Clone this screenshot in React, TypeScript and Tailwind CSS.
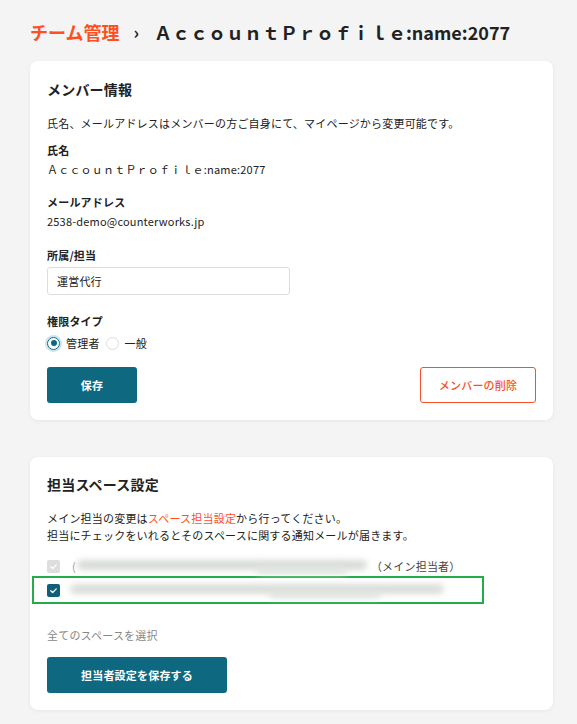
import React from "react";

const font = { fontFamily: '"Noto Sans CJK JP", "Noto Sans", sans-serif' };

function Check({ className }: { className?: string }) {
  return (
    <svg viewBox="0 0 12 12" className={className} fill="none">
      <path d="M3 6.2 5.1 8.2 9 4.2" stroke="white" strokeWidth="1.4" strokeLinecap="round" strokeLinejoin="round" />
    </svg>
  );
}

function Radio({ checked, label }: { checked?: boolean; label: string }) {
  return (
    <label className="flex items-center gap-[6px]">
      {checked ? (
        <span className="flex h-[13px] w-[13px] items-center justify-center rounded-full border-[1.5px] border-[#0e6880] shadow-[0_0_0_2px_#cfe3ec]">
          <span className="h-[6px] w-[6px] rounded-full bg-[#0e6880]" />
        </span>
      ) : (
        <span className="h-[13px] w-[13px] rounded-full border border-[#dcdcdc] bg-white" />
      )}
      <span>{label}</span>
    </label>
  );
}

export default function App() {
  return (
    <div className="min-h-[724px] bg-[#f4f4f4] pb-[14px] pl-[30px] pr-[24px] pt-[20px] text-[11px] leading-[16px] tracking-[0.2px] text-[#222]" style={font}>
      {/* breadcrumb */}
      <h1 className="flex items-center text-[18px] font-bold leading-[24px] tracking-normal">
        <span className="text-[#ff4f1f]">チーム管理</span>
        <span className="ml-[14px] mr-[15px] text-[17px]">›</span>
        <span>ＡｃｃｏｕｎｔＰｒｏｆｉｌｅ:name:2077</span>
      </h1>

      {/* member info */}
      <section className="mt-[17px] rounded-lg bg-white px-[17px] pb-[17px] pt-[18px] shadow-[0_1px_4px_rgba(0,0,0,0.06)]">
        <h2 className="text-[14px] font-bold leading-[20px]">メンバー情報</h2>
        <p className="mt-[16px]">氏名、メールアドレスはメンバーの方ご自身にて、マイページから変更可能です。</p>

        <div className="mt-[11px] font-bold">氏名</div>
        <div className="mt-[3px]">ＡｃｃｏｕｎｔＰｒｏｆｉｌｅ:name:2077</div>

        <div className="mt-[17px] font-bold">メールアドレス</div>
        <div className="mt-[3px]">2538-demo@counterworks.jp</div>

        <div className="mt-[18px] font-bold">所属/担当</div>
        <div className="mt-[4px] flex h-[28px] w-[243px] items-center rounded-[3px] border border-[#dddddd] px-[9px]">運営代行</div>

        <div className="mt-[18px] font-bold">権限タイプ</div>
        <div className="mt-[6px] flex items-center gap-[6px]">
          <Radio checked label="管理者" />
          <Radio label="一般" />
        </div>

        <div className="mt-[16px] flex items-center justify-between">
          <button className="flex h-[36px] w-[90px] items-center justify-center rounded-[3px] bg-[#0e6880] font-bold text-white">保存</button>
          <button className="flex h-[36px] w-[116px] items-center justify-center rounded-[3px] border border-[#f5512a] bg-white font-medium text-[#f5512a]">メンバーの削除</button>
        </div>
      </section>

      {/* space settings */}
      <section className="mt-[37px] rounded-lg bg-white px-[17px] pb-[17px] pt-[17px] shadow-[0_1px_4px_rgba(0,0,0,0.06)]">
        <h2 className="text-[14px] font-bold leading-[20px]">担当スペース設定</h2>
        <p className="mt-[16px] leading-[17px]">
          メイン担当の変更は<span className="text-[#ff4f1f]">スペース担当設定</span>から行ってください。
          <br />
          担当にチェックをいれるとそのスペースに関する通知メールが届きます。
        </p>

        <div className="mt-[12px] flex h-[20px] items-center">
          <span className="flex h-[13px] w-[13px] items-center justify-center rounded-[2px] bg-[#dedede]">
            <Check className="h-[11px] w-[11px]" />
          </span>
          <span className="ml-[12px] text-[#999]">(</span>
          <span className="relative ml-[1px] h-[14px] w-[292px]">
            <span className="absolute left-0 top-[1px] h-[10px] w-[290px] rounded-full bg-[#d7dbd7] blur-[3px]" />
            <span className="absolute left-[180px] top-[7px] h-[8px] w-[90px] rounded-full bg-[#e0e4e0] blur-[3px]" />
          </span>
          <span className="ml-[2px] text-[#444]">（メイン担当者）</span>
        </div>

        <div className="-ml-[15px] flex h-[28px] w-[452px] items-center border-2 border-[#22ad4a] pl-[13px]">
          <span className="flex h-[13px] w-[13px] items-center justify-center rounded-[2px] bg-[#0e5f7a]">
            <Check className="h-[11px] w-[11px]" />
          </span>
          <span className="relative ml-[10px] h-[14px] w-[376px]">
            <span className="absolute left-0 top-[1px] h-[10px] w-[374px] rounded-full bg-[#d9ddd9] blur-[3px]" />
            <span className="absolute left-[200px] top-[7px] h-[8px] w-[110px] rounded-full bg-[#e0e4e0] blur-[3px]" />
          </span>
        </div>

        <div className="mt-[23px] text-[#888]">全てのスペースを選択</div>

        <button className="mt-[14px] flex h-[36px] w-[180px] items-center justify-center rounded-[3px] bg-[#0e6880] font-bold text-white">担当者設定を保存する</button>
      </section>
    </div>
  );
}
